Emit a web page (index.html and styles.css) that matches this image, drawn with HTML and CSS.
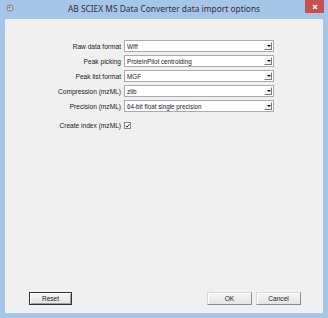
FILE: index.html
```html
<!DOCTYPE html>
<html>
<head>
<meta charset="utf-8">
<link rel="stylesheet" href="styles.css">
</head>
<body>
<div class="window">
  <div class="titlebar">
    <svg class="app-icon" width="8" height="8" viewBox="0 0 8 8">
      <circle cx="4" cy="4" r="3.5" fill="#8a8f96"/>
      <circle cx="4" cy="4" r="2.3" fill="#d5d8dc"/>
      <circle cx="3.6" cy="3.6" r="1.1" fill="#6d7278"/>
    </svg>
    <div class="title">AB SCIEX MS Data Converter data import options</div>
    <div class="close">
      <svg width="6" height="6" viewBox="0 0 6 6"><path d="M1 1L5 5M5 1L1 5" stroke="#fff" stroke-width="1.4"/></svg>
    </div>
  </div>
  <div class="client">
    <div class="form">
      <div class="label">Raw data format</div>
      <div class="combo"><span class="val">Wiff</span><span class="arrow"></span></div>
      <div class="label">Peak picking</div>
      <div class="combo"><span class="val">ProteinPilot centroiding</span><span class="arrow"></span></div>
      <div class="label">Peak list format</div>
      <div class="combo"><span class="val">MGF</span><span class="arrow"></span></div>
      <div class="label">Compression (mzML)</div>
      <div class="combo"><span class="val">zlib</span><span class="arrow"></span></div>
      <div class="label">Precision (mzML)</div>
      <div class="combo"><span class="val">64-bit float single precision</span><span class="arrow"></span></div>
      <div class="label">Create index (mzML)</div>
      <div class="check-cell">
        <span class="checkbox">
          <svg width="6" height="6" viewBox="0 0 6 6"><path d="M0.8 2.8L2.3 4.4L5.2 1" fill="none" stroke="#222" stroke-width="1.2"/></svg>
        </span>
      </div>
    </div>
    <div class="buttons">
      <div class="btn btn-default">Reset</div>
      <div class="spacer"></div>
      <div class="btn">OK</div>
      <div class="btn">Cancel</div>
    </div>
  </div>
</div>
</body>
</html>
```
FILE: styles.css
```css
html, body {
  margin: 0;
  padding: 0;
  background: #a6c6e8;
}
.window {
  width: 328px;
  height: 318px;
  box-sizing: border-box;
  background: #a6c6e8;
  padding: 0 5px 5px 5px;
  display: flex;
  flex-direction: column;
}
.titlebar {
  height: 19px;
  position: relative;
  display: flex;
  align-items: center;
  justify-content: center;
}
.app-icon {
  position: absolute;
  left: 1px;
  top: 4px;
}
.title {
  font-family: "Noto Sans", "Open Sans", sans-serif;
  font-size: 8.4px;
  color: #333;
  margin-top: -3px;
}
.close {
  position: absolute;
  right: -1px;
  top: 0;
  width: 19px;
  height: 13px;
  background: #c75050;
  display: flex;
  align-items: center;
  justify-content: center;
}
.client {
  flex: 1;
  background: #f0f0f0;
  display: flex;
  flex-direction: column;
  padding: 21px 0 8px 0;
}
.form {
  display: grid;
  grid-template-columns: 116px 150px;
  grid-template-rows: repeat(5, 12px) 21px;
  column-gap: 3px;
  row-gap: 3px;
  align-items: center;
}
.label {
  font-family: "Liberation Sans", Arial, sans-serif;
  font-size: 6.6px;
  color: #222;
  text-align: right;
}
.check-cell {
  display: flex;
  align-items: center;
}
.combo {
  height: 12px;
  box-sizing: border-box;
  background: #fff;
  border: 1px solid #a9abb0;
  display: flex;
  align-items: center;
  padding: 0 1px 0 2px;
}
.val {
  flex: 1;
  font-family: "Liberation Sans", Arial, sans-serif;
  font-size: 6.3px;
  color: #222;
}
.arrow {
  width: 8px;
  height: 8px;
  box-sizing: border-box;
  background: #f2f2f2;
  border: 1px solid #fff;
  border-right-color: #7a7a7a;
  border-bottom-color: #7a7a7a;
  position: relative;
}
.arrow::after {
  content: "";
  position: absolute;
  left: 1.5px;
  top: 2px;
  border-left: 2px solid transparent;
  border-right: 2px solid transparent;
  border-top: 2px solid #111;
}
.checkbox {
  width: 7px;
  height: 7px;
  box-sizing: border-box;
  border: 1px solid #8a8a8a;
  background: #fff;
  display: flex;
  align-items: center;
  justify-content: center;
}
.buttons {
  margin-top: auto;
  display: flex;
  align-items: center;
  padding: 0 22px 0 24px;
  gap: 4px;
}
.spacer {
  flex: 1;
}
.btn {
  width: 45px;
  height: 13px;
  box-sizing: border-box;
  background: linear-gradient(#f6f6f6, #e4e4e4);
  border: 1px solid #d8d8d8;
  border-right-color: #8c8c8c;
  border-bottom-color: #8c8c8c;
  box-shadow: inset 1px 1px 0 #fff;
  font-family: "Liberation Sans", Arial, sans-serif;
  font-size: 6.6px;
  color: #222;
  display: flex;
  align-items: center;
  justify-content: center;
}
.btn-default {
  width: 43px;
  border: 1px solid #333;
  box-shadow: inset 1px 1px 0 #fff, inset -1px -1px 0 #a0a0a0;
}
```
